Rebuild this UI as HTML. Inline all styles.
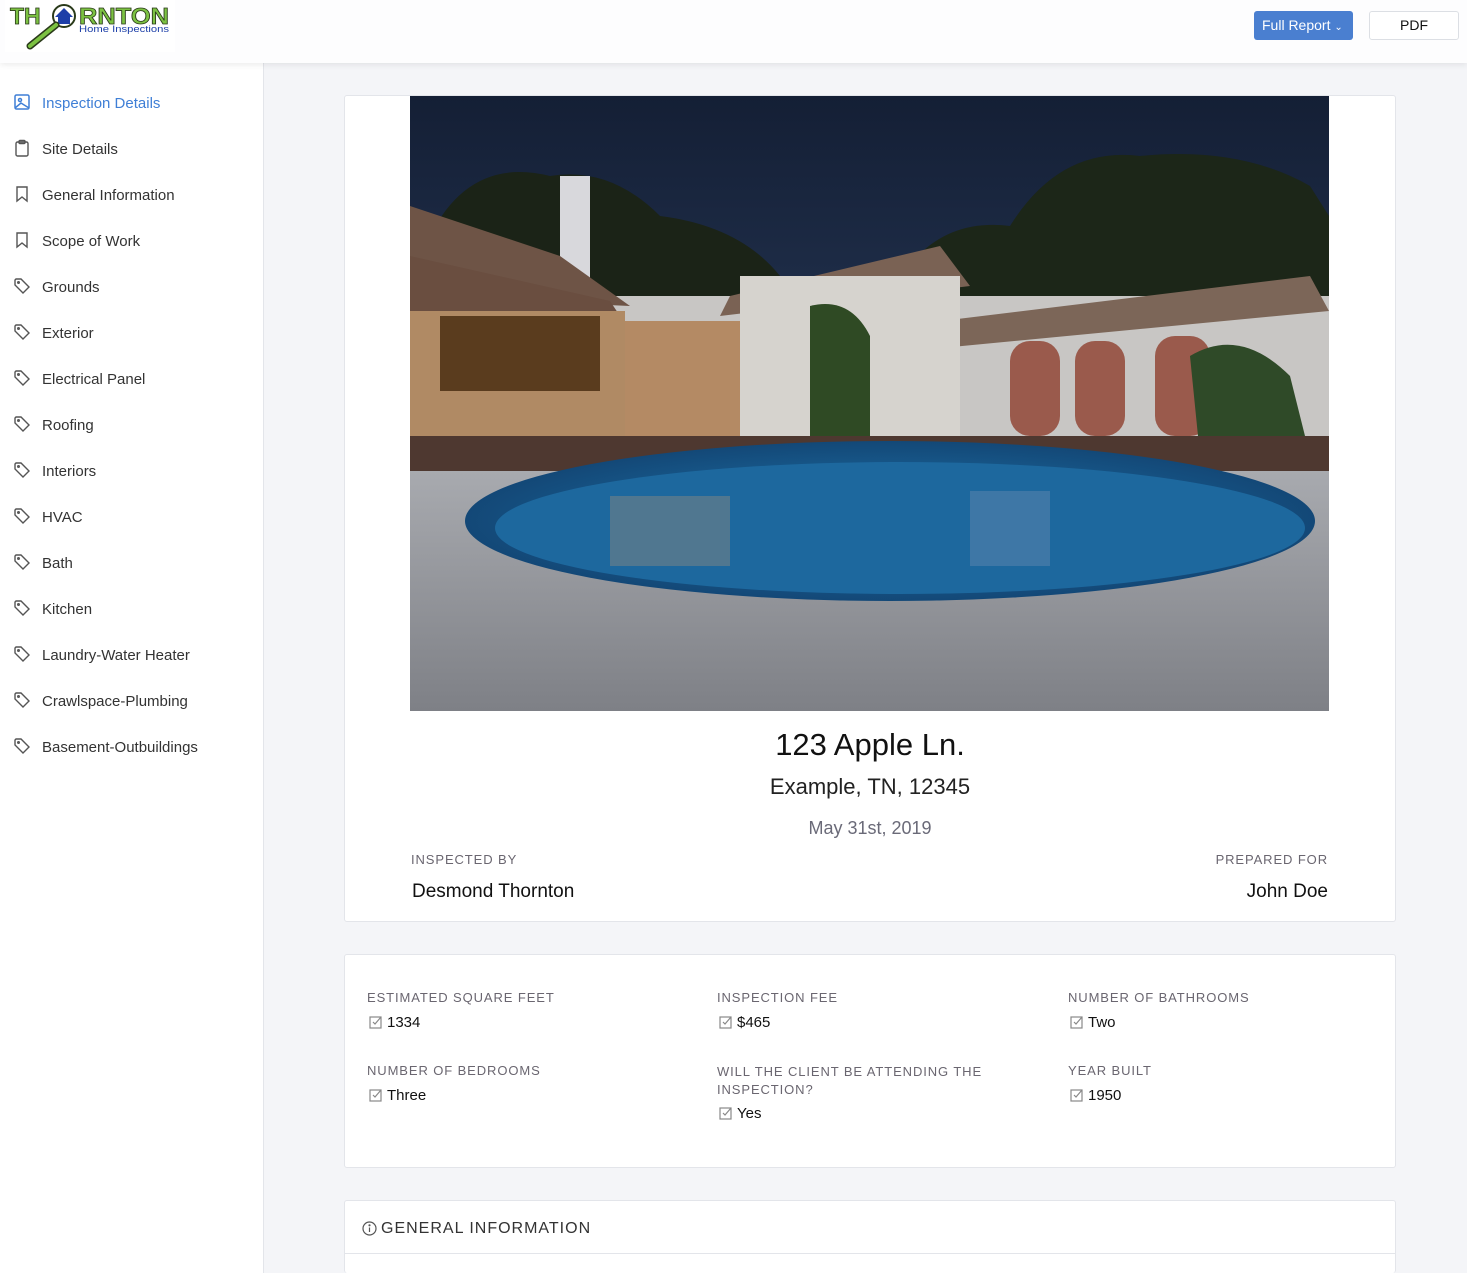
<!DOCTYPE html>
<html><head><meta charset="utf-8"><style>
*{box-sizing:border-box;margin:0;padding:0}
html,body{width:1467px;height:1273px;overflow:hidden}
body{background:#f4f5f8;font-family:"Liberation Sans",sans-serif;position:relative;color:#222}
.hdr{position:absolute;left:0;top:0;width:1467px;height:63px;background:#fdfdfe;box-shadow:0 2px 6px rgba(0,0,0,.08);z-index:2}
.side{position:absolute;left:0;top:63px;width:264px;height:1210px;background:#fff;border-right:1px solid #e3e5ea}
.it{position:absolute;left:0;height:24px;width:260px;font-size:15px;color:#333}
.it svg{position:absolute;left:13px;top:1px}
.it span{position:absolute;left:42px;top:3px}
.card{position:absolute;background:#fff;border:1px solid #e3e5ea;border-radius:3px}
.lab{position:absolute;font-size:13px;letter-spacing:0.9px;color:#6a6670}
.val{position:absolute;font-size:15px;color:#111}
.val svg{position:absolute;left:-18px;top:1px}
</style></head><body>
<div class="hdr">
 <div style="position:absolute;left:5px;top:0;width:170px;height:52px;background:#fff"></div>
 <svg style="position:absolute;left:8px;top:2px" width="165" height="48">
  <text x="2" y="22" font-family="Liberation Sans" font-weight="bold" font-size="23" fill="#7cc242" stroke="#2a3a1a" stroke-width="0.8">TH</text>
  <text x="71" y="22" font-family="Liberation Sans" font-weight="bold" font-size="23" fill="#7cc242" stroke="#2a3a1a" stroke-width="0.8" textLength="90" lengthAdjust="spacingAndGlyphs">RNTON</text>
  <circle cx="56" cy="14" r="11" fill="#fff" stroke="#2a3a1a" stroke-width="2"/>
  <path d="M47 15 L56 6 L65 15 L62 15 L62 22 L50 22 L50 15Z" fill="#1d3fa8"/>
  <path d="M48 23 L22 44" stroke="#2a3a1a" stroke-width="7" stroke-linecap="round"/>
  <path d="M48 23 L22 44" stroke="#7cc242" stroke-width="4" stroke-linecap="round"/>
  <text x="71" y="30" font-family="Liberation Sans" font-size="9.5" fill="#1d3fa8" textLength="90" lengthAdjust="spacingAndGlyphs">Home Inspections</text>
 </svg>
 <div style="position:absolute;left:1254px;top:11px;width:99px;height:29px;background:#4a7fd0;border-radius:3px;color:#fff;font-size:14px;line-height:29px;padding-left:8px">Full Report <span style="font-size:10px">&#8964;</span></div>
 <div style="position:absolute;left:1369px;top:11px;width:90px;height:29px;background:#fff;border:1px solid #dcdfe4;border-radius:3px;font-size:14px;line-height:27px;text-align:center;color:#111">PDF</div>
</div>
<div class="side">
 <div class="it" style="top:29px;color:#3f7fd6"><svg width="18" height="18" viewBox="0 0 18 18" fill="none" stroke="#3f7fd6" stroke-width="1.5"><rect x="2" y="2" width="14" height="14" rx="1.5"/><circle cx="7" cy="7" r="1.5"/><path d="M2 15 L8 10 L16 15"/></svg><span>Inspection Details</span></div>
 <div class="it" style="top:75px"><svg width="18" height="18" viewBox="0 0 18 18" fill="none" stroke="#555" stroke-width="1.4"><rect x="3" y="3" width="12" height="14" rx="1.5"/><rect x="6" y="1.5" width="6" height="3" rx="1"/></svg><span>Site Details</span></div>
 <div class="it" style="top:121px"><svg width="18" height="18" viewBox="0 0 18 18" fill="none" stroke="#555" stroke-width="1.4"><path d="M4 2 H14 V16 L9 12 L4 16Z"/></svg><span>General Information</span></div>
 <div class="it" style="top:167px"><svg width="18" height="18" viewBox="0 0 18 18" fill="none" stroke="#555" stroke-width="1.4"><path d="M4 2 H14 V16 L9 12 L4 16Z"/></svg><span>Scope of Work</span></div>
 <div class="it" style="top:213px"><svg width="18" height="18" viewBox="0 0 18 18" fill="none" stroke="#555" stroke-width="1.4"><path d="M2 3 L2 8 L10 16 L16 10 L8 2 L3 2Z"/><circle cx="5.5" cy="5.5" r="0.8"/></svg><span>Grounds</span></div>
 <div class="it" style="top:259px"><svg width="18" height="18" viewBox="0 0 18 18" fill="none" stroke="#555" stroke-width="1.4"><path d="M2 3 L2 8 L10 16 L16 10 L8 2 L3 2Z"/><circle cx="5.5" cy="5.5" r="0.8"/></svg><span>Exterior</span></div>
 <div class="it" style="top:305px"><svg width="18" height="18" viewBox="0 0 18 18" fill="none" stroke="#555" stroke-width="1.4"><path d="M2 3 L2 8 L10 16 L16 10 L8 2 L3 2Z"/><circle cx="5.5" cy="5.5" r="0.8"/></svg><span>Electrical Panel</span></div>
 <div class="it" style="top:351px"><svg width="18" height="18" viewBox="0 0 18 18" fill="none" stroke="#555" stroke-width="1.4"><path d="M2 3 L2 8 L10 16 L16 10 L8 2 L3 2Z"/><circle cx="5.5" cy="5.5" r="0.8"/></svg><span>Roofing</span></div>
 <div class="it" style="top:397px"><svg width="18" height="18" viewBox="0 0 18 18" fill="none" stroke="#555" stroke-width="1.4"><path d="M2 3 L2 8 L10 16 L16 10 L8 2 L3 2Z"/><circle cx="5.5" cy="5.5" r="0.8"/></svg><span>Interiors</span></div>
 <div class="it" style="top:443px"><svg width="18" height="18" viewBox="0 0 18 18" fill="none" stroke="#555" stroke-width="1.4"><path d="M2 3 L2 8 L10 16 L16 10 L8 2 L3 2Z"/><circle cx="5.5" cy="5.5" r="0.8"/></svg><span>HVAC</span></div>
 <div class="it" style="top:489px"><svg width="18" height="18" viewBox="0 0 18 18" fill="none" stroke="#555" stroke-width="1.4"><path d="M2 3 L2 8 L10 16 L16 10 L8 2 L3 2Z"/><circle cx="5.5" cy="5.5" r="0.8"/></svg><span>Bath</span></div>
 <div class="it" style="top:535px"><svg width="18" height="18" viewBox="0 0 18 18" fill="none" stroke="#555" stroke-width="1.4"><path d="M2 3 L2 8 L10 16 L16 10 L8 2 L3 2Z"/><circle cx="5.5" cy="5.5" r="0.8"/></svg><span>Kitchen</span></div>
 <div class="it" style="top:581px"><svg width="18" height="18" viewBox="0 0 18 18" fill="none" stroke="#555" stroke-width="1.4"><path d="M2 3 L2 8 L10 16 L16 10 L8 2 L3 2Z"/><circle cx="5.5" cy="5.5" r="0.8"/></svg><span>Laundry-Water Heater</span></div>
 <div class="it" style="top:627px"><svg width="18" height="18" viewBox="0 0 18 18" fill="none" stroke="#555" stroke-width="1.4"><path d="M2 3 L2 8 L10 16 L16 10 L8 2 L3 2Z"/><circle cx="5.5" cy="5.5" r="0.8"/></svg><span>Crawlspace-Plumbing</span></div>
 <div class="it" style="top:673px"><svg width="18" height="18" viewBox="0 0 18 18" fill="none" stroke="#555" stroke-width="1.4"><path d="M2 3 L2 8 L10 16 L16 10 L8 2 L3 2Z"/><circle cx="5.5" cy="5.5" r="0.8"/></svg><span>Basement-Outbuildings</span></div>
</div>

<div class="card" style="left:344px;top:95px;width:1052px;height:827px">
 <svg style="position:absolute;left:65px;top:0" width="919" height="615" viewBox="0 0 919 615">
  <defs>
   <linearGradient id="sky" x1="0" y1="0" x2="0" y2="1"><stop offset="0" stop-color="#141f35"/><stop offset="1" stop-color="#33496e"/></linearGradient>
   <linearGradient id="pave" x1="0" y1="0" x2="0" y2="1"><stop offset="0" stop-color="#a8aaaf"/><stop offset="1" stop-color="#7e8086"/></linearGradient>
   <radialGradient id="pool" cx=".5" cy=".5" r=".5"><stop offset="0" stop-color="#1f78b0"/><stop offset="1" stop-color="#134877"/></radialGradient>
  </defs>
  <rect width="919" height="615" fill="url(#sky)"/>
  <path d="M20 140 Q60 60 140 80 Q200 70 250 120 Q330 130 370 180 L370 260 L20 260Z" fill="#1b2317"/>
  <path d="M480 200 Q520 120 600 130 Q650 50 730 60 Q830 50 900 90 L919 120 L919 260 L480 260Z" fill="#1c2618"/>
  <rect x="150" y="80" width="30" height="110" fill="#d8d8dc"/>
  <rect x="0" y="200" width="919" height="150" fill="#c8c6c4"/>
  <path d="M0 110 L150 160 L220 210 L0 200Z" fill="#6e5446"/>
  <path d="M0 160 L200 205 L220 235 L0 220Z" fill="#6a4e40"/>
  <path d="M320 200 L530 150 L560 190 L310 220Z" fill="#7a6254"/>
  <path d="M490 230 L900 180 L919 215 L500 255Z" fill="#7c6658"/>
  <rect x="330" y="180" width="220" height="170" fill="#d6d3ce"/>
  <rect x="0" y="215" width="215" height="125" fill="#b08a64"/>
  <rect x="30" y="220" width="160" height="75" fill="#5a3c1e"/>
  <rect x="215" y="225" width="115" height="120" fill="#b48a64"/>
  <rect x="600" y="245" width="50" height="95" fill="#9a5a4c" rx="20"/>
  <rect x="665" y="245" width="50" height="95" fill="#9a5a4c" rx="20"/>
  <rect x="745" y="240" width="55" height="100" fill="#9a5a4c" rx="20"/>
  <path d="M400 210 Q440 200 460 240 L460 340 L400 340Z" fill="#2f4a24"/>
  <path d="M780 260 Q830 230 880 280 L900 360 L790 360Z" fill="#2f4a28"/>
  <rect x="0" y="340" width="919" height="45" fill="#4e3830"/>
  <rect x="0" y="375" width="919" height="240" fill="url(#pave)"/>
  <ellipse cx="480" cy="425" rx="425" ry="80" fill="url(#pool)"/>
  <ellipse cx="490" cy="432" rx="405" ry="66" fill="#1d689e"/>
  <path d="M560 395 L640 395 L640 470 L560 470Z" fill="#8a9cb8" opacity=".3"/>
  <path d="M200 400 L320 400 L320 470 L200 470Z" fill="#c89a70" opacity=".3"/>
 </svg>
 <div style="position:absolute;left:0;width:1050px;top:631px;text-align:center;font-size:31px;color:#111">123 Apple Ln.</div>
 <div style="position:absolute;left:0;width:1050px;top:678px;text-align:center;font-size:22px;color:#222">Example, TN, 12345</div>
 <div style="position:absolute;left:0;width:1050px;top:722px;text-align:center;font-size:18px;color:#6a6a78">May 31st, 2019</div>
 <div class="lab" style="left:66px;top:756px">INSPECTED BY</div>
 <div style="position:absolute;left:67px;top:785px;font-size:19px;color:#111">Desmond Thornton</div>
 <div class="lab" style="right:67px;top:756px">PREPARED FOR</div>
 <div style="position:absolute;right:67px;top:785px;font-size:19px;color:#111">John Doe</div>
</div>

<div class="card" style="left:344px;top:954px;width:1052px;height:214px">
 <div class="lab" style="left:22px;top:35px">ESTIMATED SQUARE FEET</div>
 <div class="val" style="left:42px;top:59px"><svg width="14" height="14" viewBox="0 0 14 14" fill="none" stroke="#888" stroke-width="1.2"><rect x="1" y="2" width="11" height="11"/><path d="M4 7 L6 9 L12 2"/></svg>1334</div>
 <div class="lab" style="left:372px;top:35px">INSPECTION FEE</div>
 <div class="val" style="left:392px;top:59px"><svg width="14" height="14" viewBox="0 0 14 14" fill="none" stroke="#888" stroke-width="1.2"><rect x="1" y="2" width="11" height="11"/><path d="M4 7 L6 9 L12 2"/></svg>$465</div>
 <div class="lab" style="left:723px;top:35px">NUMBER OF BATHROOMS</div>
 <div class="val" style="left:743px;top:59px"><svg width="14" height="14" viewBox="0 0 14 14" fill="none" stroke="#888" stroke-width="1.2"><rect x="1" y="2" width="11" height="11"/><path d="M4 7 L6 9 L12 2"/></svg>Two</div>
 <div class="lab" style="left:22px;top:108px">NUMBER OF BEDROOMS</div>
 <div class="val" style="left:42px;top:132px"><svg width="14" height="14" viewBox="0 0 14 14" fill="none" stroke="#888" stroke-width="1.2"><rect x="1" y="2" width="11" height="11"/><path d="M4 7 L6 9 L12 2"/></svg>Three</div>
 <div class="lab" style="left:372px;top:108px;line-height:18px">WILL THE CLIENT BE ATTENDING THE<br>INSPECTION?</div>
 <div class="val" style="left:392px;top:150px"><svg width="14" height="14" viewBox="0 0 14 14" fill="none" stroke="#888" stroke-width="1.2"><rect x="1" y="2" width="11" height="11"/><path d="M4 7 L6 9 L12 2"/></svg>Yes</div>
 <div class="lab" style="left:723px;top:108px">YEAR BUILT</div>
 <div class="val" style="left:743px;top:132px"><svg width="14" height="14" viewBox="0 0 14 14" fill="none" stroke="#888" stroke-width="1.2"><rect x="1" y="2" width="11" height="11"/><path d="M4 7 L6 9 L12 2"/></svg>1950</div>
</div>

<div class="card" style="left:344px;top:1200px;width:1052px;height:73px;border-bottom:none">
 <svg style="position:absolute;left:17px;top:20px" width="15" height="15" viewBox="0 0 15 15" fill="none" stroke="#555" stroke-width="1.2"><circle cx="7.5" cy="7.5" r="6.5"/><path d="M7.5 6.5 V11"/><circle cx="7.5" cy="4.3" r=".5"/></svg>
 <div style="position:absolute;left:36px;top:19px;font-size:16px;letter-spacing:1px;color:#333">GENERAL INFORMATION</div>
 <div style="position:absolute;left:0;right:0;top:52px;border-top:1px solid #e3e5ea"></div>
</div>
</body></html>
